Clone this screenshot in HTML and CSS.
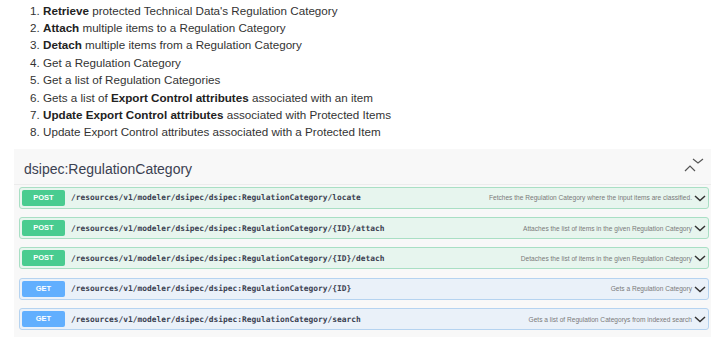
FILE: index.html
```html
<!DOCTYPE html>
<html lang="en">
<head>
    <meta charset="UTF-8">
    <title>dsipec:RegulationCategory</title>
    <link rel="stylesheet" href="styles.css">
</head>
<body>
    <ol class="ops-list">
        <li><b>Retrieve</b> protected Technical Data's Regulation Category</li>
        <li><b>Attach</b> multiple items to a Regulation Category</li>
        <li><b>Detach</b> multiple items from a Regulation Category</li>
        <li>Get a Regulation Category</li>
        <li>Get a list of Regulation Categories</li>
        <li>Gets a list of <b>Export Control attributes</b> associated with an item</li>
        <li><b>Update Export Control attributes</b> associated with Protected Items</li>
        <li>Update Export Control attributes associated with a Protected Item</li>
    </ol>

    <div class="tag-section">
        <div class="tag-header">
            <span class="tag-name">dsipec:RegulationCategory</span>
            <span class="tag-toggle">
                <svg width="22" height="16" viewBox="0 0 22 16">
                    <polyline points="2,14 7,9 12,14" fill="none" stroke="#555" stroke-width="1.2"/>
                    <polyline points="10,2 15,6 20,2" fill="none" stroke="#555" stroke-width="1.2"/>
                </svg>
            </span>
        </div>
        <div class="op-list">
            <div class="op op-post">
                <span class="op-method">POST</span>
                <span class="op-path">/resources/v1/modeler/dsipec/dsipec:RegulationCategory/locate</span>
                <span class="op-desc">Fetches the Regulation Category where the input items are classified.</span>
                <svg class="op-arrow" width="12" height="8" viewBox="0 0 12 8"><polyline points="1,2 6,6.5 11,2" fill="none" stroke="#333" stroke-width="1.5"/></svg>
            </div>
            <div class="op op-post">
                <span class="op-method">POST</span>
                <span class="op-path">/resources/v1/modeler/dsipec/dsipec:RegulationCategory/{ID}/attach</span>
                <span class="op-desc">Attaches the list of items in the given Regulation Category</span>
                <svg class="op-arrow" width="12" height="8" viewBox="0 0 12 8"><polyline points="1,2 6,6.5 11,2" fill="none" stroke="#333" stroke-width="1.5"/></svg>
            </div>
            <div class="op op-post">
                <span class="op-method">POST</span>
                <span class="op-path">/resources/v1/modeler/dsipec/dsipec:RegulationCategory/{ID}/detach</span>
                <span class="op-desc">Detaches the list of items in the given Regulation Category</span>
                <svg class="op-arrow" width="12" height="8" viewBox="0 0 12 8"><polyline points="1,2 6,6.5 11,2" fill="none" stroke="#333" stroke-width="1.5"/></svg>
            </div>
            <div class="op op-get">
                <span class="op-method">GET</span>
                <span class="op-path">/resources/v1/modeler/dsipec/dsipec:RegulationCategory/{ID}</span>
                <span class="op-desc">Gets a Regulation Category</span>
                <svg class="op-arrow" width="12" height="8" viewBox="0 0 12 8"><polyline points="1,2 6,6.5 11,2" fill="none" stroke="#333" stroke-width="1.5"/></svg>
            </div>
            <div class="op op-get">
                <span class="op-method">GET</span>
                <span class="op-path">/resources/v1/modeler/dsipec/dsipec:RegulationCategory/search</span>
                <span class="op-desc">Gets a list of Regulation Categorys from indexed search</span>
                <svg class="op-arrow" width="12" height="8" viewBox="0 0 12 8"><polyline points="1,2 6,6.5 11,2" fill="none" stroke="#333" stroke-width="1.5"/></svg>
            </div>
        </div>
    </div>
</body>
</html>
```

FILE: styles.css
```css
*, *::before, *::after {
    box-sizing: border-box;
}

html, body {
    margin: 0;
    background: #fff;
}
body {
    font-family: "Liberation Sans", Arial, sans-serif;
    color: #3b4151;
    overflow: hidden;
}

.ops-list {
    margin: 0;
    padding: 1.5px 0 0 43px;
    font-size: 11.65px;
    line-height: 17.4px;
    color: #333;
}
.ops-list b {
    color: #222;
}

.tag-section {
    margin: 8px 10px 0 14px;
    background: #f8f8f8;
    padding-bottom: 8px;
}
.tag-header {
    display: flex;
    align-items: center;
    justify-content: space-between;
    height: 36px;
    padding: 6px 6px 0 10px;
    border-bottom: 1px solid #ececec;
}
.tag-name {
    font-size: 14px;
    color: #3b4151;
}
.tag-toggle {
    display: flex;
    margin-top: -8px;
}

.op-list {
    display: flex;
    flex-direction: column;
    gap: 8.33px;
    padding: 2px 2px 0 5px;
}
.op {
    display: flex;
    align-items: center;
    height: 22px;
    padding: 0 2px 0 2px;
    border: 1px solid;
    border-radius: 3px;
}
.op-post {
    background: #e7f5ee;
    border-color: #a9dfc4;
}
.op-get {
    background: #eaf1f9;
    border-color: #b5d3f0;
}
.op-method {
    flex: 0 0 43px;
    height: 16px;
    line-height: 16px;
    border-radius: 2px;
    color: #fff;
    font-weight: bold;
    font-size: 7.5px;
    text-align: center;
}
.op-post .op-method {
    background: #49cc90;
}
.op-get .op-method {
    background: #61affe;
}
.op-path {
    margin-left: 6px;
    font-family: "DejaVu Sans Mono", "Liberation Mono", monospace;
    font-weight: bold;
    font-size: 7.9px;
    color: #3b4151;
    white-space: nowrap;
}
.op-desc {
    flex: 1;
    text-align: right;
    font-size: 6.6px;
    color: #7a7a7a;
    white-space: nowrap;
}
.op-arrow {
    margin-left: 2px;
    flex: 0 0 auto;
}
```
